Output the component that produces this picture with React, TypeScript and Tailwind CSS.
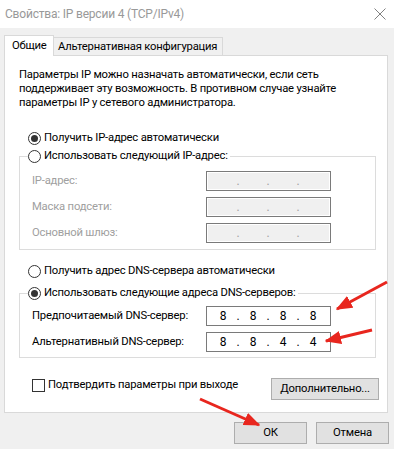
import { Fragment } from 'react';

function Radio({ checked }: { checked?: boolean }) {
  return (
    <span className="flex h-[13px] w-[13px] shrink-0 items-center justify-center rounded-full border border-[#333333] bg-white">
      {checked && <span className="h-[7px] w-[7px] rounded-full bg-[#333333]" />}
    </span>
  );
}

function IpBox({ values, disabled }: { values: string[]; disabled?: boolean }) {
  return (
    <div
      className={`flex h-[20px] w-[125px] items-center border border-[#7a7a7a] pl-[4px] text-[12px] ${
        disabled ? 'bg-[#f0f0f0] text-[#a0a0a0] shadow-[inset_0_0_0_1px_#ffffff]' : 'bg-white text-black'
      }`}
    >
      {[0, 1, 2, 3].map((i) => (
        <Fragment key={i}>
          {i > 0 && <span className="w-[6px] text-center">.</span>}
          <span className="w-[24px] text-center">{values[i] ?? ''}</span>
        </Fragment>
      ))}
    </div>
  );
}

function Row({ label, values, disabled }: { label: string; values: string[]; disabled?: boolean }) {
  return (
    <div className="flex h-[20px] items-center">
      <span className={`w-[174px] ${disabled ? 'text-[#a0a0a0]' : 'text-black'}`}>{label}</span>
      <IpBox values={values} disabled={disabled} />
    </div>
  );
}

function Button({ children, className = '' }: { children: React.ReactNode; className?: string }) {
  return (
    <button
      className={`flex h-[22px] items-center justify-center border border-[#adadad] bg-[#e1e1e1] text-black ${className}`}
    >
      {children}
    </button>
  );
}

export default function App() {
  return (
    <div className="relative h-[449px] w-[394px] overflow-hidden whitespace-nowrap bg-[#f0f0f0] font-['Roboto',sans-serif] text-[11.25px] leading-[16px] tracking-[-0.2px] text-black">
      {/* title bar */}
      <div className="flex h-[28px] items-center justify-between bg-white pl-[5px] pr-[8px]">
        <span className="text-[12px] tracking-[-0.2px] text-[#999999]">Свойства: IP версии 4 (TCP/IPv4)</span>
        <svg width="12" height="12" viewBox="0 0 12 12">
          <path d="M0.5 0.5 L11.5 11.5 M11.5 0.5 L0.5 11.5" stroke="#808080" strokeWidth="1" />
        </svg>
      </div>

      {/* tabs */}
      <div className="flex items-end px-[4px] pt-[7px]">
        <div className="relative z-10 -mb-px flex h-[21px] w-[50px] items-start border border-b-0 border-[#d9d9d9] bg-white pl-[7px] pt-[2px]">
          Общие
        </div>
        <div className="flex h-[18px] w-[169px] items-center border border-b-0 border-l-0 border-[#d9d9d9] bg-[#f0f0f0] pl-[4px]">
          Альтернативная конфигурация
        </div>
      </div>

      {/* panel */}
      <div className="mx-[4px] flex h-[358px] w-[384px] flex-col border border-[#d9d9d9] bg-white pl-[14px]">
        <p className="mt-[12px] leading-[14px]">
          Параметры IP можно назначать автоматически, если сеть
          <br />
          поддерживает эту возможность. В противном случае узнайте
          <br />
          параметры IP у сетевого администратора.
        </p>

        <label className="ml-[9px] mt-[20px] flex h-[16px] items-center gap-[3px]">
          <Radio checked />
          Получить IP-адрес автоматически
        </label>

        <fieldset className="mt-[2px] w-[357px] border border-[#dcdcdc] pb-[6px]">
          <legend className="ml-[8px] flex h-[16px] items-center gap-[3px] bg-white pr-[2px]">
            <Radio />
            Использовать следующий IP-адрес:
          </legend>
          <div className="mt-[7px] flex flex-col gap-[6px] pl-[12px]">
            <Row label="IP-адрес:" values={[]} disabled />
            <Row label="Маска подсети:" values={[]} disabled />
            <Row label="Основной шлюз:" values={[]} disabled />
          </div>
        </fieldset>

        <label className="ml-[9px] mt-[13px] flex h-[16px] items-center gap-[3px]">
          <Radio />
          Получить адрес DNS-сервера автоматически
        </label>

        <fieldset className="mt-[6px] w-[357px] border border-[#dcdcdc] pb-[5px]">
          <legend className="ml-[8px] flex h-[16px] items-center gap-[3px] bg-white pr-[2px]">
            <Radio checked />
            Использовать следующие адреса DNS-серверов:
          </legend>
          <div className="mt-[5px] flex flex-col gap-[6px] pl-[12px]">
            <Row label="Предпочитаемый DNS-сервер:" values={['8', '8', '8', '8']} />
            <Row label="Альтернативный DNS-сервер:" values={['8', '8', '4', '4']} />
          </div>
        </fieldset>

        <div className="mt-[20px] flex items-start justify-between pl-[13px] pr-[8px]">
          <label className="flex h-[14px] items-center gap-[3px]">
            <span className="h-[13px] w-[13px] border border-[#333333] bg-white" />
            Подтвердить параметры при выходе
          </label>
          <Button className="w-[108px]">Дополнительно...</Button>
        </div>
      </div>

      {/* bottom buttons */}
      <div className="mt-[9px] flex justify-end gap-[9px] pr-[5px]">
        <Button className="w-[73px]">ОК</Button>
        <Button className="w-[73px]">Отмена</Button>
      </div>

      {/* red annotation arrows */}
      <svg className="pointer-events-none absolute inset-0" width="394" height="449" viewBox="0 0 394 449">
        <defs>
          <marker id="ah" markerWidth="5.5" markerHeight="4.4" refX="5" refY="2.2" orient="auto" markerUnits="strokeWidth">
            <path d="M0 0 L5.5 2.2 L0 4.4 Z" fill="#e8261e" />
          </marker>
        </defs>
        <line x1="387" y1="282" x2="337" y2="309" stroke="#e8261e" strokeWidth="3" markerEnd="url(#ah)" />
        <line x1="372" y1="330" x2="326" y2="341" stroke="#e8261e" strokeWidth="3" markerEnd="url(#ah)" />
        <line x1="200" y1="399" x2="259" y2="425" stroke="#e8261e" strokeWidth="3" markerEnd="url(#ah)" />
      </svg>
    </div>
  );
}
